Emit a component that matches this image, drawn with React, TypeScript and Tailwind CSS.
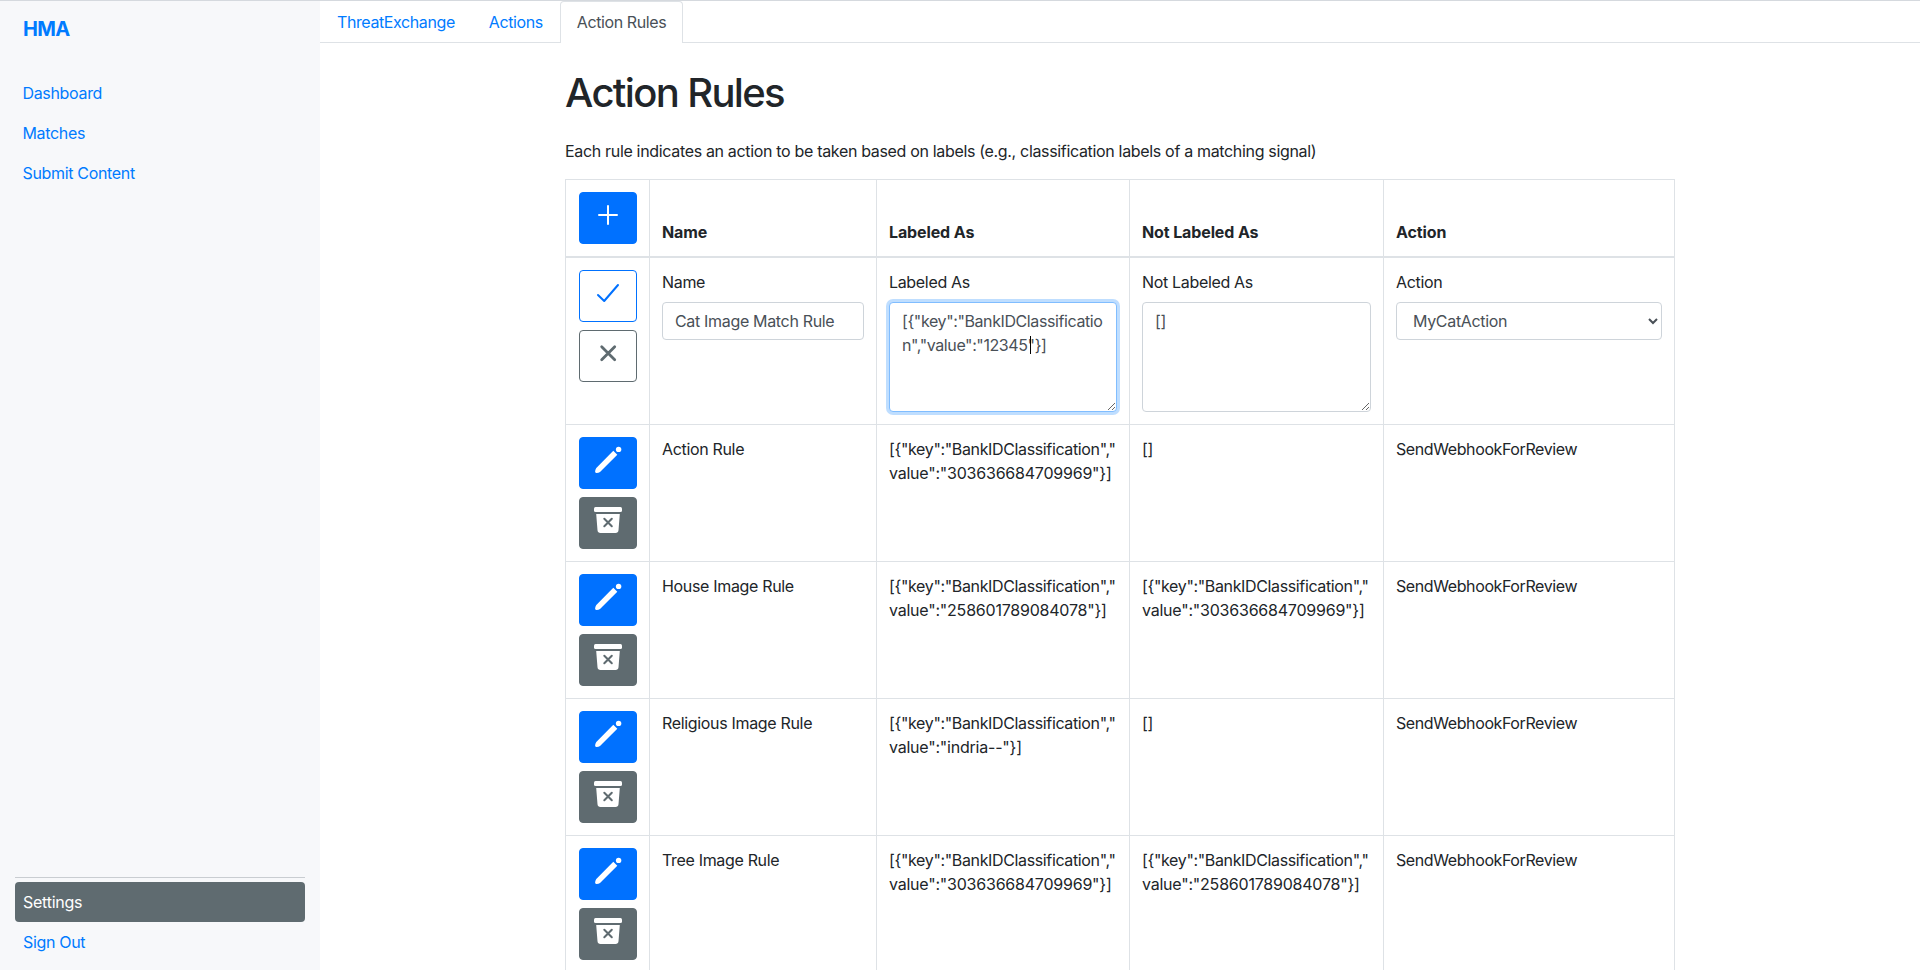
import React from "react";

type Rule = { name: string; labeled: string[]; notLabeled: string[]; action: string };

const K = '[{"key":"BankIDClassification","';
const rules: Rule[] = [
  { name: "Action Rule", labeled: [K, 'value":"303636684709969"}]'], notLabeled: ["[]"], action: "SendWebhookForReview" },
  { name: "House Image Rule", labeled: [K, 'value":"258601789084078"}]'], notLabeled: [K, 'value":"303636684709969"}]'], action: "SendWebhookForReview" },
  { name: "Religious Image Rule", labeled: [K, 'value":"indria--"}]'], notLabeled: ["[]"], action: "SendWebhookForReview" },
  { name: "Tree Image Rule", labeled: [K, 'value":"303636684709969"}]'], notLabeled: [K, 'value":"258601789084078"}]'], action: "SendWebhookForReview" },
];

const cell = "border border-[#dee2e6] px-3 pt-3 align-top";
const head = "border border-[#dee2e6] border-b-2 px-3 pb-3 align-bottom text-left font-bold tracking-[-0.12px]";
const field = "block w-full rounded border border-[#ced4da] bg-white px-3 py-1.5 text-[#495057] outline-none";
const btn = "flex h-[52px] w-[58px] items-start justify-center rounded border";
const icon = "mt-1.5 size-8";

function Plus() {
  return (
    <svg viewBox="0 0 32 32" className={icon} fill="none" stroke="currentColor" strokeWidth="2" strokeLinecap="round">
      <path d="M16 7v18M7 16h18" />
    </svg>
  );
}
function Check() {
  return (
    <svg viewBox="0 0 32 32" className={icon} fill="none" stroke="currentColor" strokeWidth="2" strokeLinecap="round" strokeLinejoin="round">
      <path d="M6 18l6.200 6L26 8" />
    </svg>
  );
}
function Cross() {
  return (
    <svg viewBox="0 0 32 32" className={icon} fill="none" stroke="currentColor" strokeWidth="2.800" strokeLinecap="round">
      <path d="M9.700 9.700l13 13M22.700 9.700l-13 13" />
    </svg>
  );
}
function Pencil() {
  return (
    <svg viewBox="0 0 32 32" className={icon} fill="currentColor">
      <path d="M21.300 6.800l4 4L8 28q-1.500 1.200-3.700 1.100-1.300-.2-1.200-1.500.1-2.100 1.200-3.600z" />
      <circle cx="26.600" cy="5.400" r="2.700" />
    </svg>
  );
}
function Bin() {
  return (
    <svg viewBox="0 0 32 32" className={icon} fill="currentColor">
      <rect x="2" y="3" width="28" height="5" rx="1.500" />
      <path d="M4.200 10h23.600l-1.300 16.300a3 3 0 0 1-3 2.700H8.500a3 3 0 0 1-3-2.700z" />
      <path d="M12.300 14.700l7.500 7.500M19.800 14.700l-7.500 7.500" stroke="#5f6b70" strokeWidth="2" strokeLinecap="round" />
    </svg>
  );
}

function Labels({ lines }: { lines: string[] }) {
  return (
    <>
      {lines.map((l) => (
        <div key={l} className={l === K ? "whitespace-nowrap tracking-[-0.36px]" : "whitespace-nowrap tracking-[-0.22px]"}>{l}</div>
      ))}
    </>
  );
}

export default function App() {
  return (
    <div className="flex h-[970px] w-[1920px] overflow-hidden border-t border-[#d5d9de] bg-white font-['Inter',sans-serif] text-base tracking-[-0.33px] text-[#212529]">
      <aside className="flex w-80 shrink-0 flex-col bg-[#f7f8fa] px-[15px] text-[#007bff]">
        <div className="mt-[13px] px-2 text-xl leading-[30px] font-bold tracking-[-0.7px]">HMA</div>
        <nav className="mt-[29px] flex flex-col">
          {["Dashboard", "Matches", "Submit Content"].map((t) => (
            <a key={t} className="px-[7.5px] py-2">{t}</a>
          ))}
        </nav>
        <nav className="mt-auto mb-2 flex flex-col border-t border-[#c9cdd1] pt-1">
          <a className="rounded bg-[#5f6b70] px-2 py-2 tracking-[-0.25px] text-white">Settings</a>
          <a className="px-2 py-2">Sign Out</a>
        </nav>
      </aside>
      <main className="min-w-0 flex-1">
        <div className="flex h-[42px] border-b border-[#dee2e6] tracking-[-0.4px] text-[#007bff]">
          <a className="border border-transparent px-4 py-2">ThreatExchange</a>
          <a className="border border-transparent px-4 py-2">Actions</a>
          <a className="h-[42px] rounded-t border border-b-0 border-[#dee2e6] bg-white px-4 py-2 text-[#495057]">Action Rules</a>
        </div>
        <div className="ml-[245px] w-[1110px]">
          <h1 className="mt-[26px] text-[40px] leading-12 font-medium tracking-[-1.65px]">Action Rules</h1>
          <p className="mt-[22px] whitespace-nowrap">
            Each rule indicates an action to be taken based on labels (e.g., classification labels of a matching signal)
          </p>
          <table className="mt-4 w-[1110px] table-fixed border-collapse">
            <colgroup>
              <col className="w-[84px]" />
              <col className="w-[227px]" />
              <col className="w-[253px]" />
              <col className="w-[254px]" />
              <col />
            </colgroup>
            <thead>
              <tr className="h-[77px]">
                <th className="border border-b-2 border-[#dee2e6] px-[13px] pt-3 align-top">
                  <button className={btn + " border-[#0071ff] bg-[#0071ff] text-white"}><Plus /></button>
                </th>
                {["Name", "Labeled As", "Not Labeled As", "Action"].map((t) => (
                  <th key={t} className={head}>{t}</th>
                ))}
              </tr>
            </thead>
            <tbody>
              <tr className="h-[168px]">
                <td className={cell}>
                  <div className="flex flex-col gap-2 pl-px">
                    <button className={btn + " border-[#0071ff] text-[#0071ff]"}><Check /></button>
                    <button className={btn + " border-[#5f6b70] text-[#5f6b70]"}><Cross /></button>
                  </div>
                </td>
                <td className={cell}>
                  <label className="mb-2 block">Name</label>
                  <input className={field + " h-[38px]"} defaultValue="Cat Image Match Rule" />
                </td>
                <td className={cell}>
                  <label className="mb-2 block">Labeled As</label>
                  <div className="relative">
                    <textarea
                      className="block h-[110px] w-full resize rounded border border-[#80bdff] bg-white px-3 py-1.5 tracking-[-0.4px] break-all text-[#495057] shadow-[0_0_0_3px_rgba(0,123,255,0.25)] outline-none"
                      defaultValue={'[{"key":"BankIDClassification","value":"12345"}]'}
                    />
                    <span className="absolute top-[34px] left-[141px] h-[18px] w-px bg-black" />
                  </div>
                </td>
                <td className={cell}>
                  <label className="mb-2 block">Not Labeled As</label>
                  <textarea className={field + " h-[110px] resize"} defaultValue="[]" />
                </td>
                <td className={cell}>
                  <label className="mb-2 block">Action</label>
                  <select className={field + " h-[38px]"}>
                    <option>MyCatAction</option>
                  </select>
                </td>
              </tr>
              {rules.map((r) => (
                <tr key={r.name} className="h-[137px]">
                  <td className={cell}>
                    <div className="flex flex-col gap-2 pl-px">
                      <button className={btn + " border-[#0071ff] bg-[#0071ff] text-white"}><Pencil /></button>
                      <button className={btn + " border-[#5f6b70] bg-[#5f6b70] text-white"}><Bin /></button>
                    </div>
                  </td>
                  <td className={cell}>{r.name}</td>
                  <td className={cell}><Labels lines={r.labeled} /></td>
                  <td className={cell}><Labels lines={r.notLabeled} /></td>
                  <td className={cell + " tracking-[-0.4px]"}>{r.action}</td>
                </tr>
              ))}
            </tbody>
          </table>
        </div>
      </main>
    </div>
  );
}
